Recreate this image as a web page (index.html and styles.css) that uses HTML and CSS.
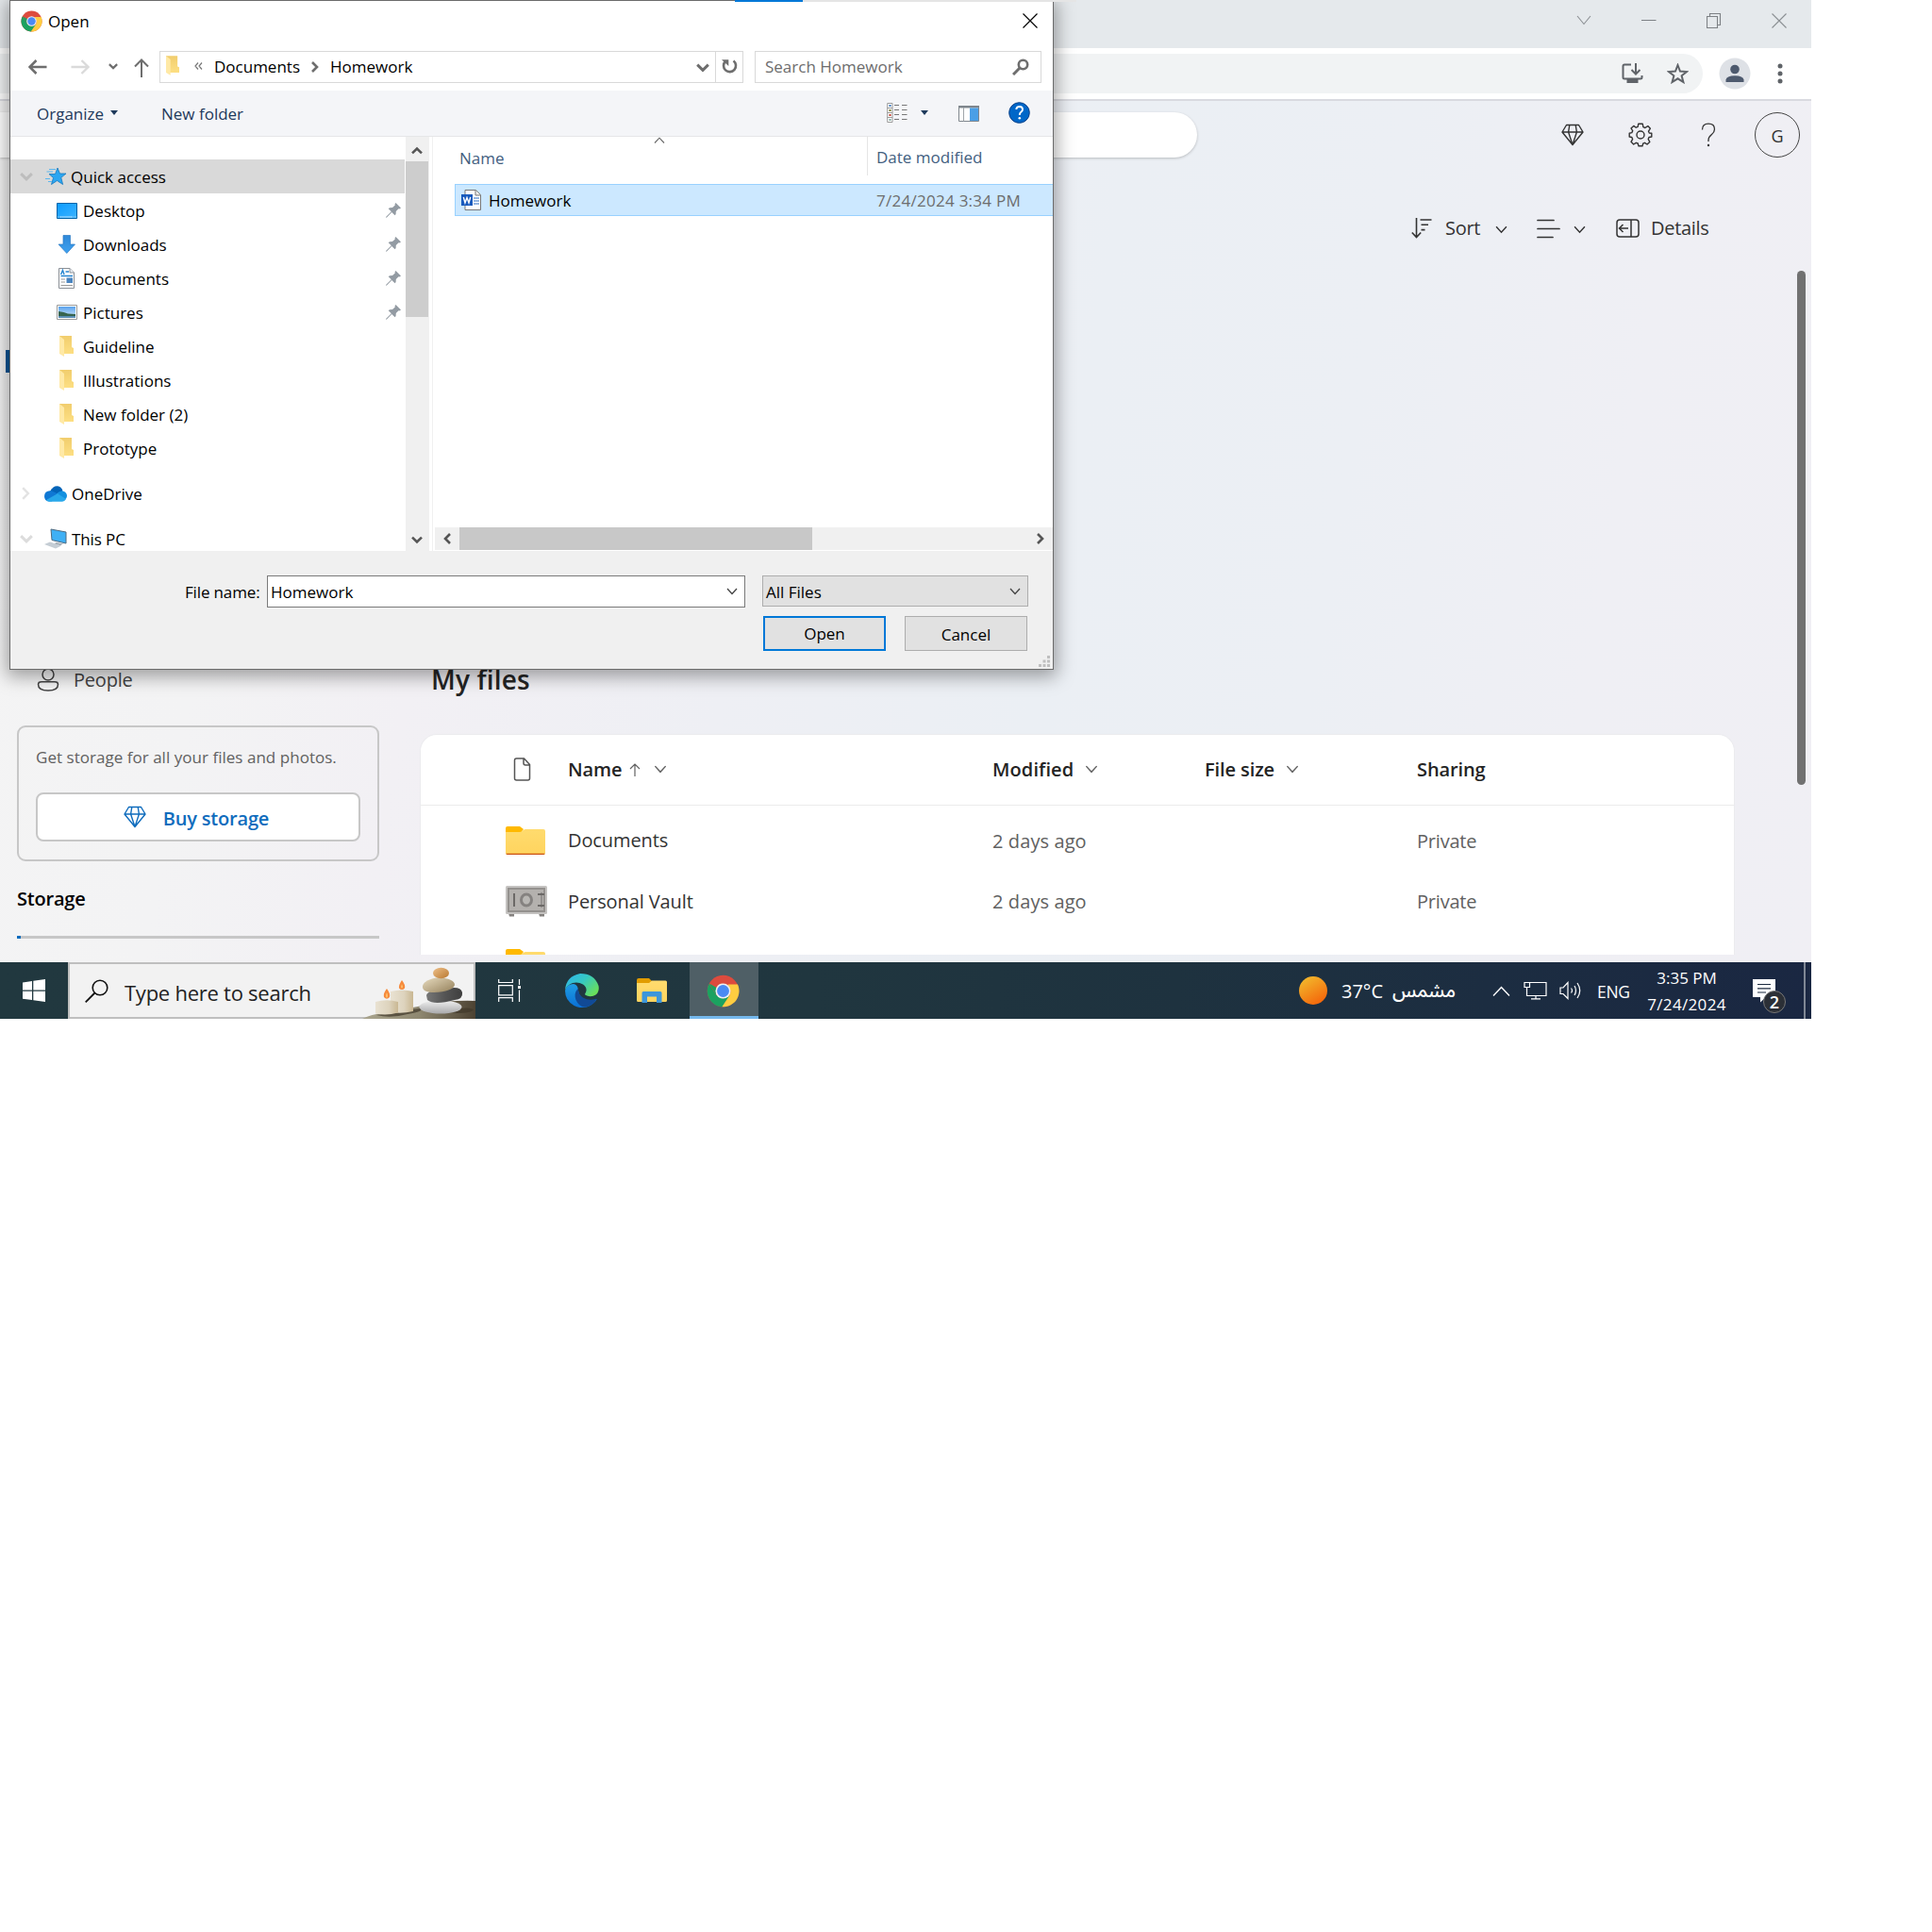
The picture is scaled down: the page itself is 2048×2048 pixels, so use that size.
FILE: index.html
```html
<!DOCTYPE html>
<html lang="en">
<head>
<meta charset="utf-8">
<title>Desktop</title>
<link rel="stylesheet" href="styles.css">
</head>
<body>
<svg class="defs" width="0" height="0" aria-hidden="true">
  <defs>
    <linearGradient id="gFold" x1="0" y1="0" x2="0" y2="1"><stop offset="0" stop-color="#f1cd6d"/><stop offset="1" stop-color="#fddf83"/></linearGradient>
    <linearGradient id="gDesk" x1="0" y1="0" x2="1" y2="1"><stop offset="0" stop-color="#0a9bff"/><stop offset="1" stop-color="#3db4ff"/></linearGradient>
    <linearGradient id="gDown" x1="0" y1="0" x2="0" y2="1"><stop offset="0" stop-color="#2f88d8"/><stop offset="1" stop-color="#3fa2f0"/></linearGradient>
    <linearGradient id="gSky" x1="0" y1="0" x2="0" y2="1"><stop offset="0" stop-color="#5aa2ee"/><stop offset="1" stop-color="#d8ecfa"/></linearGradient>
    <linearGradient id="gYellow" x1="0" y1="0" x2="0" y2="1"><stop offset="0" stop-color="#ffdb6e"/><stop offset="1" stop-color="#ffd45e"/></linearGradient>
    <linearGradient id="gSun" x1="0" y1="0" x2=".6" y2="1"><stop offset="0" stop-color="#f2c230"/><stop offset="1" stop-color="#f4690c"/></linearGradient>
    <linearGradient id="gEdgeTop" x1="0" y1="0" x2="1" y2=".7"><stop offset="0" stop-color="#2fb3ef"/><stop offset=".5" stop-color="#35c8c4"/><stop offset="1" stop-color="#6ae05a"/></linearGradient>
    <linearGradient id="gEdgeLow" x1="0" y1="0" x2="0" y2="1"><stop offset="0" stop-color="#1f9de4"/><stop offset="1" stop-color="#0a70d6"/></linearGradient>
    <linearGradient id="gCandle" x1="0" y1="0" x2="1" y2="0"><stop offset="0" stop-color="#e9e2d2"/><stop offset=".6" stop-color="#ddd3bd"/><stop offset="1" stop-color="#c9b792"/></linearGradient>
    <linearGradient id="gTable" x1="0" y1="0" x2="1" y2="0"><stop offset="0" stop-color="#aaa58e"/><stop offset=".5" stop-color="#8f8871"/><stop offset="1" stop-color="#4c4232"/></linearGradient>
    <linearGradient id="gStoneA" x1="0" y1="0" x2="1" y2="1"><stop offset="0" stop-color="#edc08a"/><stop offset="1" stop-color="#b9782f"/></linearGradient>
    <linearGradient id="gStoneB" x1="0" y1="0" x2="1" y2="1"><stop offset="0" stop-color="#e8dcc0"/><stop offset="1" stop-color="#94805a"/></linearGradient>
    <linearGradient id="gStoneC" x1="0" y1="0" x2="1" y2="0"><stop offset="0" stop-color="#777"/><stop offset=".5" stop-color="#555"/><stop offset="1" stop-color="#3e3e3e"/></linearGradient>
    <linearGradient id="gStoneD" x1="0" y1="0" x2="0" y2="1"><stop offset="0" stop-color="#f0f0f0"/><stop offset="1" stop-color="#a9a9ab"/></linearGradient>
    <symbol id="chrome" viewBox="0 0 48 48">
      <circle cx="24" cy="24" r="23" fill="#dd4b3e"/>
      <path d="M3.500 13.500A23 23 0 0 0 23 47L34 30 24 35 14 29.700z" fill="#1ba260"/>
      <path d="M45.200 14.500A23 23 0 0 1 22.500 47L34 29.500 35 24 31 14.500z" fill="#ffcd41"/>
      <path d="M3.800 13 14 29.800 16 20z" fill="#1ba260"/>
      <circle cx="24" cy="24" r="11" fill="#f1f1f1"/><circle cx="24" cy="24" r="8.800" fill="#4a8af4"/>
    </symbol>
    <symbol id="chev" viewBox="0 0 12 8"><path d="M1 1 6 6.500 11 1" fill="none" stroke="currentColor" stroke-width="1.300"/></symbol>
    <symbol id="chevBold" viewBox="0 0 14 9"><path d="M1.200 1.200 7 6.800 12.800 1.200" fill="none" stroke="currentColor" stroke-width="3"/></symbol>
    <symbol id="folderSmall" viewBox="0 0 15 22"><path d="M0 0H13V12L15 13V19H0z" fill="url(#gFold)"/><path d="M0 0 5 4V22L0 19z" fill="#ffe9a6"/></symbol>
    <symbol id="pin" viewBox="0 0 16 16"><path d="M10.500 0 16 5.500 14.500 6.500 13.500 6.200 10.800 9 10.600 12 9.600 13.200 6.300 9.900 1 15.600 0 15.800 .3 14.800 5.800 9.200 2.700 6.300 4 5.200 7 5 9.800 2.400 9.500 1.200z" fill="#939ba3"/></symbol>
    <symbol id="gem" viewBox="0 0 24 23"><path d="M5.500 1H18.500L23 8.500 12 22 1 8.500zM1 8.500H23M8.800 1 7.600 8.500 12 22 16.400 8.500 15.200 1" fill="none" stroke="currentColor" stroke-width="1.400" stroke-linejoin="round"/></symbol>
    <symbol id="folderBig" viewBox="0 0 42 30"><path d="M0 2Q0 0 2 0H15L19 3 15 8H0z" fill="#ffb900"/><path d="M0 6H14.500Q16.500 6 18 4.500 19.500 3 21 3H40Q42 3 42 5V28Q42 30 40 30H2Q0 30 0 28z" fill="url(#gYellow)"/><path d="M.3 28.800H41.700Q41.400 30 40 30H2Q.6 30 .3 28.800z" fill="#ca5010"/></symbol>
  </defs>
</svg>

<div class="screen">
  <main class="browser">
    <header class="tabstrip">
      <svg width="16" height="11" viewBox="0 0 16 11"><path d="M1 1 8 9.500 15 1" fill="none" stroke="#8b8f93" stroke-width="1.100"/></svg>
      <svg width="16" height="16" viewBox="0 0 16 16"><path d="M0 7.500H15.500" stroke="#7d8185"/></svg>
      <svg width="16" height="16" viewBox="0 0 16 16"><path d="M.5 3.500H11.500V15.500H.5zM3.500 3.500V.5H14.500V12.500H11.500" fill="none" stroke="#7d8185" stroke-width="1.100"/></svg>
      <svg width="16" height="16" viewBox="0 0 16 16"><path d="M.5 .5 15.500 15.500M15.500 .5 .5 15.500" stroke="#8b8f93" stroke-width="1.100"/></svg>
    </header>
    <div class="toolbar">
      <div class="omnibox">
        <svg width="23" height="22" viewBox="0 0 23 22"><path d="M10 1.500H3Q1.500 1.500 1.500 3V15Q1.500 16.500 3 16.500H20Q21.500 16.500 21.500 15V13" fill="none" stroke="#5f6368" stroke-width="2"/><path d="M5.500 17H17.500V21H5.500z" fill="#5f6368"/><path d="M15 0V11M10.500 7 15 11.500 19.500 7" fill="none" stroke="#5f6368" stroke-width="2"/></svg>
        <svg width="23" height="22" viewBox="0 0 23 22"><path d="M11.500 2 14 8.500 21 9 15.600 13.300 17.400 20 11.500 16.300 5.600 20 7.400 13.300 2 9 9 8.500z" fill="none" stroke="#5f6368" stroke-width="2"/></svg>
      </div>
      <svg class="profile" width="34" height="34" viewBox="0 0 34 34"><circle cx="17" cy="17" r="16.500" fill="#dee1e6"/><circle cx="17" cy="12.500" r="4.800" fill="#4e5a6e"/><path d="M7.500 26V23.500Q8 19.500 17 19.300 26 19.500 26.500 23.500V26z" fill="#4e5a6e"/></svg>
      <svg width="8" height="22" viewBox="0 0 8 22"><g fill="#5f6368"><circle cx="4" cy="3" r="2.500"/><circle cx="4" cy="11" r="2.500"/><circle cx="4" cy="19" r="2.500"/></g></svg>
    </div>

    <div class="page">
      <div class="page-head">
        <div class="site-search"></div>
        <div class="head-icons">
          <svg class="gem" width="24" height="24"><use href="#gem"/></svg>
          <svg width="26" height="26" viewBox="0 0 26 26"><path d="M10.800 1.200H15.200L15.900 4.600 17.900 5.500 20.800 3.600 23.400 6.200 21.500 9.200 22.300 11 24.800 11.300V15L22 15.500 21.200 17.500 22.800 20.400 20 23 17.500 21.300 15.700 22.100 15 24.800H11L10.200 22 8.300 21.300 5.700 23 3 20.300 4.600 17.600 3.800 15.500 1.200 15V11.200L3.800 10.600 4.700 8.700 3 6 5.800 3.400 8.200 5.200 10.200 4.400z" fill="none" stroke="#333" stroke-width="1.400" stroke-linejoin="round"/><circle cx="13" cy="13" r="4" fill="none" stroke="#333" stroke-width="1.400"/></svg>
          <svg width="16" height="26" viewBox="0 0 16 26"><path d="M1.500 7.500Q1.500 1.200 8 1.200 14.500 1.200 14.500 7 14.500 10 11.500 12.500 8 15.300 8 18.500V20" fill="none" stroke="#333" stroke-width="1.300"/><circle cx="8" cy="24" r="1.200" fill="#333"/></svg>
          <span class="avatar">G</span>
        </div>
      </div>
      <div class="commands">
        <svg width="22" height="22" viewBox="0 0 22 22"><path d="M5.500 0V20M.8 15.500 5.500 20.500 10.200 15.500M9.500 2H21.500M10.500 7.300H18M10.500 12.600H14.500" fill="none" stroke="#333" stroke-width="1.600"/></svg>
        <span class="cmd">Sort</span>
        <svg class="cchev" width="13" height="9"><use href="#chev"/></svg>
        <svg class="lines" width="25" height="21" viewBox="0 0 25 21"><path d="M1 1.500H18M1 10.500H24M1 19.500H17" stroke="#333" stroke-width="1.700" stroke-linecap="round"/></svg>
        <svg class="cchev2" width="13" height="9"><use href="#chev"/></svg>
        <svg class="panel" width="25" height="20" viewBox="0 0 25 20"><rect x="1" y="1" width="23" height="18" rx="3" fill="none" stroke="#333" stroke-width="1.500"/><path d="M16 1V19M3.500 10H13M7.500 6 3.500 10 7.500 14" fill="none" stroke="#333" stroke-width="1.500"/></svg>
        <span class="cmd">Details</span>
      </div>

      <div class="content">
        <aside class="sidebar">
          <div class="marker"></div>
          <div class="nav-item">
            <svg width="24" height="26" viewBox="0 0 24 26"><circle cx="12" cy="7" r="6" fill="none" stroke="#424242" stroke-width="1.500"/><path d="M5 14.800H19Q22.500 14.800 22.500 17.500 22.500 24 12 24 1.500 24 1.500 17.500 1.500 14.800 5 14.800z" fill="none" stroke="#424242" stroke-width="1.500"/></svg>
            <span>People</span>
          </div>
          <div class="upsell">
            <p>Get storage for all your files and photos.</p>
            <button class="buy"><svg width="24" height="24"><use href="#gem"/></svg><span>Buy storage</span></button>
          </div>
          <h3>Storage</h3>
          <div class="meter"><i></i></div>
        </aside>
        <section class="files">
          <h2>My files</h2>
          <div class="table">
            <div class="tr th">
              <span class="c-icon"><svg width="19" height="25" viewBox="0 0 19 25"><path d="M11.500 1H3.500Q1.500 1 1.500 3V22Q1.500 24 3.500 24H15.500Q17.500 24 17.500 22V7.500zM11 1.500V6Q11 8 13 8H17" fill="none" stroke="#555" stroke-width="1.500"/></svg></span>
              <span class="c-name">Name <svg class="up" width="12" height="14" viewBox="0 0 12 14"><path d="M6 14V1.500M1 6 6 1 11 6" fill="none" stroke="#616161" stroke-width="1.200"/></svg><svg class="hchev" width="14" height="9"><use href="#chev"/></svg></span>
              <span class="c-mod">Modified <svg class="hchev" width="14" height="9"><use href="#chev"/></svg></span>
              <span class="c-size">File size <svg class="hchev" width="14" height="9"><use href="#chev"/></svg></span>
              <span class="c-share">Sharing</span>
            </div>
            <div class="tr first">
              <span class="c-icon"><svg width="42" height="30"><use href="#folderBig"/></svg></span>
              <span class="c-name">Documents</span><span class="c-mod">2 days ago</span><span class="c-size"></span><span class="c-share">Private</span>
            </div>
            <div class="tr">
              <span class="c-icon"><svg width="44" height="33" viewBox="0 0 44 33"><path d="M3 29H9V32.500H4zM35 29H41V32.500H36z" fill="#85827f"/><rect width="44" height="30" rx="1.500" fill="#c4c2c0"/><rect x="3" y="3" width="38" height="24" fill="#b4b1ae" stroke="#94918e" stroke-width="2"/><path d="M9 8V22" stroke="#6c6967" stroke-width="2"/><ellipse cx="22" cy="15" rx="5.500" ry="6" fill="#b9b7b4" stroke="#858280" stroke-width="3"/><path d="M38 7V23" stroke="#8a8785" stroke-width="1.500"/><path d="M34 9H41M34 21H41" stroke="#6c6967" stroke-width="2.200"/></svg></span>
              <span class="c-name">Personal Vault</span><span class="c-mod">2 days ago</span><span class="c-size"></span><span class="c-share">Private</span>
            </div>
            <div class="tr">
              <span class="c-icon"><svg width="42" height="30"><use href="#folderBig"/></svg></span>
              <span class="c-name">Pictures</span>
            </div>
          </div>
        </section>
        <div class="scroll-thumb"></div>
      </div>
    </div>
  </main>

  <footer class="taskbar">
    <div class="start"><svg width="24" height="24" viewBox="0 0 24 24"><path d="M0 3.400 10 2V11.400H0zM11.300 1.800 24 0V11.400H11.300zM0 12.700H10V22.100L0 20.700zM11.300 12.700H24V24L11.300 22.200z" fill="#fff"/></svg></div>
    <div class="tb-search">
      <svg width="25" height="25" viewBox="0 0 25 25"><circle cx="16" cy="9" r="7.800" fill="none" stroke="#111" stroke-width="1.600"/><path d="M10.500 14.500 .7 24.300" stroke="#111" stroke-width="1.800"/></svg>
      <span>Type here to search</span>
      <svg class="art" width="120" height="56" viewBox="0 0 120 56">
        <path d="M0 56 Q10 51 22 50L64 42Q90 36 120 37V56z" fill="url(#gTable)"/>
        <path d="M15 52Q40 47 62 45 66 48 48 51 30 56 15 52zM90 48Q112 42 118 46 116 50 100 50z" fill="#40372a" opacity=".7"/>
        <path d="M30 27Q42 24 54 27V48Q42 51 30 49z" fill="url(#gCandle)"/>
        <path d="M14 38Q26 34.500 38 38V49.500Q26 53 14 50.500z" fill="url(#gCandle)"/>
        <path d="M42 15Q46 20 45 23.500 42 26.500 39 23.500 38.500 20 42 15zM26 24Q30 29 29 33 26 36.500 23 33 22 29 26 24z" fill="#f68a3c"/>
        <path d="M42 19Q43.500 22 42 24 40.500 22 42 19zM26 28Q27.500 32 26 34 24.500 32 26 28z" fill="#ffd27a"/>
        <ellipse cx="83" cy="43.500" rx="22.500" ry="7" fill="url(#gStoneD)"/>
        <path d="M68 31Q70 25 86 25 104 20 106 28 107 35 98 36 76 42 69 36z" fill="url(#gStoneC)"/>
        <path d="M64 21Q66 14 82 12 98 14 98 20 96 27 76 28 63 28 64 21z" fill="url(#gStoneB)"/>
        <ellipse cx="83.500" cy="7.500" rx="8.500" ry="5.800" fill="url(#gStoneA)"/>
      </svg>
    </div>
    <div class="app taskview"><svg width="25" height="24" viewBox="0 0 25 24"><path d="M.7 0V3.500H15.300V0M.7 24V19.700H15.300V24M.7 6.700H15.300V16.800H.7zM22.500 0V6M22.500 11.500V24" fill="none" stroke="#fff" stroke-width="1.200"/><path d="M21 7H24V10H21z" fill="#fff"/></svg></div>
    <div class="app edge"><svg width="36" height="36" viewBox="0 0 36 36"><path d="M0 18A18 18 0 0 0 28 33Q33 29.500 33.500 27 26 31 19.500 27 14.500 23.500 14 18 13.800 12 9 11 2 11 0 18z" fill="url(#gEdgeLow)"/><path d="M13.500 16Q9 21 11.500 28 14.500 35 21 35.700 29 34.500 33.500 27.500 33.500 26.300 32 27 25 29 19 25.500 14 22 14 17z" fill="#114a96"/><path d="M0 17.500Q1 3 16 0 31 0 35.500 13 37 21 30 23.800 25 25 21.500 22.800 20.500 21.500 22 20 24 15 19 11.500 14 8.500 8 10 2 12 0 17.500z" fill="url(#gEdgeTop)"/></svg></div>
    <div class="app explorer"><svg width="32" height="27" viewBox="0 0 32 27"><path d="M0 2Q0 0 2 0H13L16 3 13 8H0z" fill="#e19c00"/><path d="M0 5H13L16 2.500H30.500Q32 2.500 32 4V23.500Q32 25 30.500 25H1.500Q0 25 0 23.500z" fill="url(#gYellow)"/><path d="M5.500 26V15.500Q5.500 14 7 14H25Q26.500 14 26.500 15.500V26H21V19.500H11V26z" fill="#3c96db"/></svg></div>
    <div class="app active"><svg width="35" height="35"><use href="#chrome"/></svg></div>
    <div class="tray">
      <svg class="sun" width="30" height="30" viewBox="0 0 30 30"><circle cx="15" cy="15" r="15" fill="url(#gSun)"/></svg>
      <span class="temp">37°C</span>
      <span class="ar" lang="ar" dir="rtl">مشمس</span>
      <svg class="tcaret" width="19" height="11" viewBox="0 0 19 11"><path d="M1 10.500 9.500 1.500 18 10.500" fill="none" stroke="#fff" stroke-width="1.400"/></svg>
      <svg class="net" width="25" height="20" viewBox="0 0 25 20"><path d="M6.500 1.500H24V15.500H3.500V9M8 18.800H18M13 15.500V18.800M1 1.500H6.500V6.500H1zM3.500 6.500V9" fill="none" stroke="#fff" stroke-width="1.200"/></svg>
      <svg class="vol" width="24" height="20" viewBox="0 0 24 20"><path d="M1 7H4L9 1.500V18.500L4 13.500H1z" fill="none" stroke="#fff" stroke-width="1.200"/><path d="M12.500 7.500Q14.500 10 12.500 12.500M16 5Q19 10 16 15M19 2Q24.500 10 19 18" fill="none" stroke="#fff" stroke-width="1.200"/></svg>
      <span class="eng">ENG</span>
      <div class="clock"><span>3:35 PM</span><span class="day">7/24/2024</span></div>
      <div class="action"><svg width="24" height="25" viewBox="0 0 24 25"><path d="M0 0H24V19H14L8 24.500V19H0z" fill="#fff"/><path d="M5 5.500H19M5 9.800H19M5 14H14" stroke="#1c2b40" stroke-width="1.200"/></svg><b>2</b></div>
      <i class="peek"></i>
    </div>
  </footer>

  <div class="dialog">
    <i class="progress"></i>
    <div class="d-title">
      <svg width="23" height="23"><use href="#chrome"/></svg>
      <span>Open</span>
      <svg class="close" width="16" height="16" viewBox="0 0 16 16"><path d="M.5 .5 15.500 15.500M15.500 .5 .5 15.500" stroke="#000" stroke-width="1.200"/></svg>
    </div>
    <div class="d-nav">
      <svg class="back" width="20" height="16" viewBox="0 0 20 16"><path d="M1.500 8H19.500M8.500 1 1.500 8 8.500 15" fill="none" stroke="#6e6e6e" stroke-width="2.500"/></svg>
      <svg class="fwd" width="20" height="16" viewBox="0 0 20 16"><path d="M.5 8H18.500M11.500 1 18.500 8 11.500 15" fill="none" stroke="#dadada" stroke-width="2.300"/></svg>
      <svg class="recent" width="10" height="7"><use href="#chevBold"/></svg>
      <svg class="upd" width="16" height="20" viewBox="0 0 16 20"><path d="M8 20V1.500M1 8.500 8 1.500 15 8.500" fill="none" stroke="#6e6e6e" stroke-width="2"/></svg>
      <div class="address">
        <svg class="loc" width="14" height="21"><use href="#folderSmall"/></svg>
        <svg class="laquo" width="9" height="8" viewBox="0 0 9 8"><path d="M4 .5 1 4 4 7.500M8 .5 5 4 8 7.500" fill="none" stroke="#777" stroke-width="1.200"/></svg>
        <span class="crumb">Documents</span>
        <svg class="sep" width="8" height="12" viewBox="0 0 8 12"><path d="M1 1 6 6 1 11" fill="none" stroke="#6e6e6e" stroke-width="2.600"/></svg>
        <span class="crumb">Homework</span>
        <svg class="drop" width="14" height="10"><use href="#chevBold"/></svg>
        <span class="refresh"><svg width="17" height="17" viewBox="0 0 17 17"><path d="M12.500 2.500A6.500 6.500 0 1 1 4 3" fill="none" stroke="#6e6e6e" stroke-width="2.600"/><path d="M0 1.300H7.300V8z" fill="#6e6e6e"/></svg></span>
      </div>
      <div class="d-search"><span>Search Homework</span>
        <svg width="18" height="18" viewBox="0 0 18 18"><circle cx="11.500" cy="6.500" r="4.700" fill="none" stroke="#6e6e6e" stroke-width="2.600"/><path d="M8 10 1 17" stroke="#6e6e6e" stroke-width="3"/></svg>
      </div>
    </div>
    <div class="d-tools">
      <span class="organize">Organize</span><i class="tri"></i>
      <span class="newf">New folder</span>
      <svg class="views" width="22" height="21" viewBox="0 0 22 21"><path d="M.7 .5H6V20.500H.7zM.7 5.500H6M.7 10.500H6M.7 15.500H6" fill="#fff" stroke="#9a9a9a"/><path d="M2.500 2H4.500V4H2.500z" fill="#3b78c0"/><path d="M2.500 7H4.500V9H2.500z" fill="#7a7a20"/><path d="M2.500 12H4.500V14H2.500z" fill="#c0392b"/><path d="M2.500 17H4.500V19H2.500z" fill="#7fa9a0"/><path d="M8 2.500H13M16 2.500H21.500M8 7.500H13M16 7.500H21.500M8 12.500H13M16 12.500H21.500M8 17.500H13M16 17.500H21.500" stroke="#777" stroke-width="1.200"/></svg>
      <i class="tri"></i>
      <svg class="pane" width="22" height="17" viewBox="0 0 22 17"><path d="M.5 .5H21.500V16.500H.5z" fill="#fff" stroke="#7f868d"/><path d="M0 0H22V2.500H0z" fill="#7f868d"/><path d="M5.500 2V16.500" stroke="#a0a5aa"/><path d="M12 2.500H21V16H12z" fill="#4a9fe6"/></svg>
      <svg class="help" width="23" height="23" viewBox="0 0 23 23"><circle cx="11.500" cy="11.500" r="10.800" fill="#0067c8" stroke="#0b3f86"/><path d="M8.300 8Q8.500 5 11.700 5 15 5.200 15 8 15 9.700 13.300 10.800 11.800 12 11.800 14" fill="none" stroke="#fff" stroke-width="1.900"/><circle cx="11.800" cy="17.300" r="1.300" fill="#fff"/></svg>
    </div>
    <div class="d-body">
      <ul class="tree">
        <li class="root sel"><svg class="tw" width="14" height="9"><use href="#chevBold"/></svg><svg class="ic" width="22" height="18" viewBox="0 0 22 18"><path d="M13 0 15.500 6H22L16.800 10.300 18.600 17.500 12.500 13.500 6.500 17.500 8.500 10.500 4 6.500H10.500z" fill="#2ba6f2" stroke="#1879bd" stroke-width=".8"/><path d="M4 1.500H11M1.500 4H8M0 11.500H5M3 14.500H7" stroke="#5db7ee" stroke-width="1.200"/></svg><span>Quick access</span></li>
        <li><svg class="ic" width="22" height="17" viewBox="0 0 22 17"><path d="M.5 .5H21.500V16.500H.5z" fill="url(#gDesk)" stroke="#0063a8"/><path d="M1 15H21" stroke="#bfe4ff" stroke-dasharray="1 1 14 1 1 1"/></svg><span>Desktop</span><svg class="pin" width="16" height="16"><use href="#pin"/></svg></li>
        <li><svg class="ic" width="22" height="20" viewBox="0 0 22 20"><path d="M7 .5H14.500V10H19.500L10.800 19.500 2 10H7z" fill="url(#gDown)" stroke="#2a7ac4" stroke-width=".7"/></svg><span>Downloads</span><svg class="pin" width="16" height="16"><use href="#pin"/></svg></li>
        <li><svg class="ic" width="22" height="22" viewBox="0 0 22 22"><path d="M2.500 .5H14L18.500 5V21.500H2.500z" fill="#fff" stroke="#8b9096"/><path d="M14 .5V5H18.500" fill="#e8eef4" stroke="#8b9096"/><path d="M4.500 7 6.500 2.500 8 7M9.500 4H13M4.500 8.500H17" fill="none" stroke="#2484d0" stroke-width="1.400"/><path d="M4.500 12H9M4.500 15H9M4.500 18.500H17" stroke="#999" stroke-width="1.200"/><path d="M10.500 10.500H17V16H10.500z" fill="#4a84bf"/></svg><span>Documents</span><svg class="pin" width="16" height="16"><use href="#pin"/></svg></li>
        <li><svg class="ic" width="22" height="16" viewBox="0 0 22 16"><path d="M.5 .5H21.500V15.500H.5z" fill="#fff" stroke="#9a9a9a"/><path d="M2 2H20V14H2z" fill="url(#gSky)"/><path d="M2 7Q8 7.500 12 9.500L20 10V12H2z" fill="#37644f"/><path d="M2 12H20V14H2z" fill="#5b8fb5"/></svg><span>Pictures</span><svg class="pin" width="16" height="16"><use href="#pin"/></svg></li>
        <li><svg class="ic fold" width="15" height="22"><use href="#folderSmall"/></svg><span>Guideline</span></li>
        <li><svg class="ic fold" width="15" height="22"><use href="#folderSmall"/></svg><span>Illustrations</span></li>
        <li><svg class="ic fold" width="15" height="22"><use href="#folderSmall"/></svg><span>New folder (2)</span></li>
        <li><svg class="ic fold" width="15" height="22"><use href="#folderSmall"/></svg><span>Prototype</span></li>
        <li class="root drive"><svg class="tw" width="9" height="14" viewBox="0 0 9 14"><path d="M1.200 1.200 6.800 7 1.200 12.800" fill="none" stroke="#e3e3e3" stroke-width="2.500"/></svg><svg class="ic" width="24" height="17" viewBox="0 0 24 17"><path d="M6 6Q9 0 14 .3 18 .8 19.500 5.500L12 9z" fill="#0364b8"/><path d="M0 11Q.3 5.500 6 5.300 9 5 14.500 9L8 16.500H5Q0 16 0 11z" fill="#0f78d4"/><path d="M13 8.500Q16 5 19.500 5.500 24 6.500 24 11 23.500 14 22 14.500z" fill="#1490df"/><path d="M2 15 14 8.300 23 14Q21.500 16.500 19 16.700H5Q3 16.500 2 15z" fill="#28a8ea"/></svg><span>OneDrive</span></li>
        <li class="root pc"><svg class="tw" width="14" height="9"><use href="#chevBold"/></svg><svg class="ic" width="24" height="22" viewBox="0 0 24 22"><path d="M7 1 23 4V16L8 12.500z" fill="#3fb0f5" stroke="#4e6a80"/><path d="M12 15 20 16.500 17 18 11 17z" fill="#9fa8b0"/><path d="M0 17 6 14.500 18 18.500 12 21.500z" fill="#c5cdd4"/></svg><span>This PC</span></li>
      </ul>
      <div class="vscroll"><svg width="12" height="9" viewBox="0 0 14 9"><path d="M1.200 7.800 7 2.200 12.800 7.800" fill="none" stroke="#555" stroke-width="3"/></svg><i></i><svg width="12" height="9"><use href="#chevBold"/></svg></div>
      <div class="list">
        <svg class="sortmark" width="12" height="7" viewBox="0 0 12 7"><path d="M1 6.500 6 1.200 11 6.500" fill="none" stroke="#666" stroke-width="1.100"/></svg>
        <div class="l-head"><span>Name</span><span class="date">Date modified</span></div>
        <div class="l-row">
          <svg width="21" height="22" viewBox="0 0 21 22"><path d="M4 .5H15.500L20.500 5.500V21.500H4z" fill="#fff" stroke="#777"/><path d="M15 .5V6H20.500" fill="#eee" stroke="#777"/><path d="M13 9H19M13 12H19M13 15H19" stroke="#2b6cc4" stroke-width="1.200"/><path d="M0 5H12V17H0z" fill="#185abd"/><path d="M2.300 8 4 14 6 8.500 8 14 9.700 8" fill="none" stroke="#fff" stroke-width="1.400"/></svg>
          <span class="fname">Homework</span><span class="fdate">7/24/2024 3:34 PM</span>
        </div>
        <div class="hscroll"><svg width="9" height="12" viewBox="0 0 9 12"><path d="M8 1 3 6 8 11" fill="none" stroke="#555" stroke-width="2.600"/></svg><i></i><svg width="9" height="12" viewBox="0 0 9 12"><path d="M1 1 6 6 1 11" fill="none" stroke="#555" stroke-width="2.600"/></svg></div>
      </div>
    </div>
    <div class="d-foot">
      <div class="f-row">
        <label>File name:</label>
        <div class="f-input"><span>Homework</span><svg width="12" height="8"><use href="#chev"/></svg></div>
        <div class="f-select"><span>All Files</span><svg width="12" height="8"><use href="#chev"/></svg></div>
      </div>
      <div class="f-btns"><button class="primary">Open</button><button>Cancel</button></div>
      <svg class="grip" width="12" height="12" viewBox="0 0 12 12"><path d="M9 0h3v3H9zM4.500 4.500h3v3h-3zM9 4.500h3v3H9zM0 9h3v3H0zM4.500 9h3v3h-3zM9 9h3v3H9z" fill="#bfbfbf"/></svg>
    </div>
  </div>
</div>
</body>
</html>
```
FILE: styles.css
```css
* { box-sizing: border-box; }
html, body { margin: 0; background: #fff; }
body { font-family: "Open Sans", "Noto Sans", sans-serif; font-size: 17px; line-height: 24px; color: #000; white-space: nowrap; }
svg { display: block; flex: none; }
svg.defs { position: absolute; }
button { font: inherit; color: inherit; padding: 0; margin: 0; }
h2, h3, p, ul { margin: 0; padding: 0; list-style: none; }

.screen { position: relative; width: 1920px; height: 1080px; overflow: hidden; }

/* Browser window */
.browser { display: flex; flex-direction: column; height: 1020px; }
.tabstrip { height: 51px; flex: none; display: flex; justify-content: flex-end; align-items: flex-start; gap: 53px; padding: 14px 26px 0 0; background: #e5e9ec; }
.tabstrip svg:first-child { margin-top: 2px; }
.toolbar { height: 54px; flex: none; display: flex; align-items: center; background: #fff; padding-right: 29px; }
.omnibox { flex: 1; height: 42px; border-radius: 0 21px 21px 0; background: #f1f3f4; display: flex; justify-content: flex-end; align-items: center; gap: 25px; padding-right: 15px; }
.profile { margin: 0 27px 0 17px; }

.page { flex: 1; min-height: 0; border-top: 2px solid #d9dae0; display: flex; flex-direction: column;
  background: linear-gradient(100deg, #f4f4f4 0%, #f3f3f4 15%, #f2f0f4 26%, #eeeff4 42%, #ebeff4 58%, #eceff4 72%, #efeff4 86%, #f0eff4 100%); }
.page-head { display: flex; justify-content: space-between; height: 60px; padding: 12px 12px 0 0; }
.site-search { width: 1269px; height: 48px; background: #fff; border-radius: 0 24px 24px 0; box-shadow: 0 1px 3px rgba(0,0,0,.22); }
.head-icons { display: flex; align-items: center; color: #333; }
.head-icons svg { margin-right: 47px; }
.head-icons svg + svg { margin-right: 51px; }
.head-icons svg + svg + svg { margin-right: 41px; }
.avatar { width: 48px; height: 48px; border: 1px solid #444; border-radius: 50%; text-align: center; line-height: 48px; font-size: 18px; color: #333; }
.commands { display: flex; align-items: center; height: 40px; margin-top: 55px; padding-right: 107px; justify-content: flex-end; color: #333; font-size: 20px; letter-spacing: -.3px; }
.commands .cmd { width: 63px; margin-left: 12px; }
.commands svg + .cmd:nth-child(2) { width: 38px; margin-left: 14px; }
.cchev { margin: 2px 31px 0 15px; }
.cchev2 { margin: 2px 32px 0 14px; }

.content { flex: 1; min-height: 0; display: flex; position: relative; overflow: hidden; }
.sidebar { width: 445px; flex: none; padding: 0 43px 0 0; }
.marker { width: 6px; height: 24px; margin: 109px 0 0 6px; background: #0b5596; }
.nav-item { display: flex; align-items: center; gap: 15px; height: 40px; margin: 306px 0 0 39px; font-size: 20px; letter-spacing: -.2px; color: #424242; }
.upsell { height: 144px; margin: 28px 0 0 18px; padding: 18px; border: 2px solid #c7c7c7; border-radius: 9px; color: #616161; }
.upsell p { height: 51px; line-height: 28px; letter-spacing: .03px; }
.buy { display: flex; width: 100%; height: 52px; align-items: center; justify-content: center; gap: 18px; border: 2px solid #c7c7c7; border-radius: 8px; background: #fff; color: #0f6cbd; font-size: 20px; font-weight: 600; letter-spacing: -.2px; padding-right: 4px; }
.buy span { padding-top: 3px; }
.sidebar h3 { margin: 26px 0 0 18px; font-size: 20px; font-weight: 600; line-height: 28px; letter-spacing: -.2px; }
.meter { height: 3px; margin: 25px 0 0 18px; background: #c7c7c7; }
.meter i { display: block; width: 4px; height: 3px; background: #0f6cbd; }

.files { width: 1394px; }
.files h2 { margin: 438px 0 0 12px; font-size: 28px; line-height: 40px; font-weight: 600; color: #242424; letter-spacing: .15px; }
.table { height: 234px; margin-top: 38px; overflow: hidden; background: #fff; border: 1px solid #ebebee; border-bottom: 0; border-radius: 18px 18px 0 0; color: #616161; font-size: 20px; }
.tr { height: 65px; display: grid; grid-template-columns: 156px 450px 225px 225px 1fr; align-items: center; letter-spacing: -.2px; }
.tr.th { height: 75px; border-bottom: 1px solid #ebebeb; font-weight: 600; color: #242424; letter-spacing: -.1px; }
.tr.first { margin-top: 4px; }
.tr > span { display: flex; align-items: center; }
.tr .c-icon { padding-left: 90px; }
.tr.th .c-icon { padding-left: 98px; margin-top: -2px; }
.tr .c-name { color: #333; letter-spacing: -.1px; }
.tr .c-mod { letter-spacing: .1px; }
.tr.first > .c-mod, .tr.first > .c-share { padding-top: 2px; }
.tr.th .c-name { color: #242424; }
.up { margin-left: 8px; }
.hchev { margin: -2px 0 0 12px; color: #616161; }
.up + .hchev { margin-left: 14px; }
.scroll-thumb { position: absolute; left: 1905px; top: 25px; width: 9px; height: 545px; border-radius: 5px; background: #717171; }

/* Taskbar */
.taskbar { display: flex; height: 60px; color: #fff; background: linear-gradient(90deg, #21383f 0%, #20363f 45%, #1e323f 65%, #1c2d41 82%, #1a2742 100%); }
.start { width: 72px; display: flex; align-items: center; justify-content: center; }
.tb-search { width: 432px; display: flex; align-items: center; background: #f2f2f2; border: 2px solid #bfbfbf; padding-left: 16px; color: #222; font-size: 22px; letter-spacing: -.25px; position: relative; }
.tb-search span { margin-left: 17px; padding-top: 3px; }
.art { position: absolute; right: -2px; bottom: -2px; }
.app { width: 73px; display: flex; align-items: center; justify-content: center; }
.edge { width: 80px; }
.explorer { width: 67px; margin-right: 3px; }
.active { margin-left: 4px; background: #4f5f66; border-bottom: 3px solid #76b9ed; padding: 3px 2px 0 0; }
.tray { display: flex; align-items: center; flex: 1; justify-content: flex-end; }
.temp { width: 44px; margin-left: 15px; font-size: 20px; padding-top: 2px; }
.ar { width: 65px; margin-left: 12px; font-size: 20px; font-weight: 500; font-family: "Noto Sans Arabic", "DejaVu Sans", sans-serif; padding-top: 2px; }
.tcaret { margin-left: 39px; }
.net { margin-left: 14px; }
.vol { margin-left: 13px; }
.eng { width: 33px; margin-left: 16px; letter-spacing: -.3px; font-size: 17.500px; padding-top: 1px; }
.clock { width: 100px; margin-left: 12px; display: flex; flex-direction: column; text-align: center; line-height: 28px; padding-top: 2px; }
.clock .day { letter-spacing: .35px; }
.action { position: relative; margin-left: 20px; }
.action b { position: absolute; left: 11px; top: 12px; width: 24px; height: 24px; border-radius: 50%; border: 1px solid #777; background: #2b2f36; font-size: 18px; font-weight: 600; text-align: center; line-height: 22px; }
.peek { width: 2px; height: 60px; margin: 0 6px 0 30px; background: #7f8794; }

/* File dialog */
.dialog { position: absolute; left: 10px; top: 0; width: 1107px; height: 710px; border: 1px solid #6b6b6b; background: #fff; display: flex; flex-direction: column; box-shadow: 0 4px 18px 3px rgba(0,0,0,.36); }
.progress { position: absolute; left: 768px; top: -1px; width: 362px; height: 2px; background: linear-gradient(90deg, #0078d7 72px, #e5e5e5 72px); }
.d-title { height: 44px; flex: none; display: flex; align-items: center; padding: 0 16px 2px 11px; }
.d-title span { margin-left: 6px; padding-top: 2px; }
.close { margin-left: auto; }
.d-nav { height: 51px; flex: none; display: flex; align-items: center; padding: 0 12px 0 19px; }
.fwd { margin-left: 25px; }
.recent { margin-left: 20px; color: #6e6e6e; }
.upd { margin: 3px 11px 0 17px; }
.address { width: 619px; height: 34px; border: 1px solid #d9d9d9; display: flex; align-items: center; padding-left: 6px; }
.loc { margin-top: -2px; }
.laquo { margin: -2px 12px 0 16px; }
.sep { margin: 0 12px; }
.drop { margin: 2px 6px 0 auto; color: #6e6e6e; }
.refresh { width: 29px; height: 32px; border-left: 1px solid #d9d9d9; display: flex; align-items: center; justify-content: center; }
.d-search { flex: 1; height: 34px; margin-left: 12px; border: 1px solid #d9d9d9; display: flex; align-items: center; justify-content: space-between; padding: 0 12px 0 10px; color: #6d6d6d; }
.d-tools { height: 49px; flex: none; display: flex; align-items: center; background: #f4f5f8; border-bottom: 1px solid #e5e6e8; color: #1e395b; padding: 0 23px 0 28px; }
.tri { border: 4.500px solid transparent; border-top: 5px solid #1e395b; border-bottom: 0; margin-left: 7px; margin-top: -2px; }
.newf { margin: 0 auto 0 46px; padding-top: 1px; }
.views { margin-top: -2px; }
.views + .tri { margin-left: 14px; }
.pane { margin-left: 32px; }
.help { margin: -2px 1px 0 31px; }
.organize { width: 71px; padding-top: 1px; }

.d-body { height: 439px; flex: none; display: flex; }
.tree { width: 419px; padding-top: 24px; height: 439px; overflow: hidden; }
.tree li { height: 36px; display: flex; align-items: center; padding-left: 49px; }
.tree li span { padding-top: 2px; }
.tree li .ic + span { margin-left: 6px; }
.tree .fold { margin: 0 4px 0 3px; }
.pin { margin: 0 5px 0 auto; }
.tree li.root { padding-left: 10px; }
.tree .tw { color: #bdbdbd; margin-right: 13px; }
.sel { width: 418px; background: #d9d9d9; }
.tree li.drive { margin-top: 12px; padding-left: 12px; }
.drive .tw + .ic { margin-left: 2px; }
.tree li.root .ic + span { margin-left: 5px; }
.tree li.pc { margin-top: 12px; }
.pc .tw { color: #dcdcdc; }
.pc .ic { margin-left: -1px; }
.pc .ic + span { letter-spacing: -.1px; }
.vscroll { width: 25px; height: 439px; background: #f0f0f0; display: flex; flex-direction: column; align-items: center; padding: 10px 1px 7px 0; color: #555; }
.vscroll i { width: 24px; height: 165px; margin: 7px 0 auto; background: #cdcdcd; }
.list { position: relative; flex: 1; margin-left: 3px; border-left: 1px solid #f0f0f0; display: flex; flex-direction: column; padding-left: 2px; }
.sortmark { position: absolute; left: 234px; top: 0; }
.l-head { height: 40px; display: flex; align-items: center; color: #43607f; padding: 4px 0 0 26px; }
.l-head span:first-child { width: 432px; padding-top: 1px; }
.l-head .date { border-left: 1px solid #e5e5e5; padding: 10px 0 6px 9px; margin-top: -4px; line-height: 26px; }
.l-row { height: 34px; margin: 10px 0 0 21px; display: flex; align-items: center; background: #cce8ff; border: 1px solid #99d1ff; border-right: 0; padding-left: 6px; }
.l-row span { padding-top: 1px; }
.fname { width: 411px; margin-left: 8px; }
.fdate { color: #6d6d6d; letter-spacing: .27px; }
.hscroll { height: 24px; margin-top: auto; margin-bottom: 1px; background: #f0f0f0; display: flex; align-items: center; padding: 0 8px; }
.hscroll i { width: 374px; height: 24px; margin: 0 auto 0 9px; background: #c8c8c8; }
.d-foot { position: relative; flex: 1; background: #f0f0f0; padding-top: 26px; }
.f-row { display: flex; height: 34px; line-height: 34px; padding-left: 185px; }
.f-row label { width: 87px; padding-top: 1px; letter-spacing: -.15px; }
.f-input, .f-select { display: flex; align-items: center; justify-content: space-between; border: 1px solid #7a7a7a; background: #fff; width: 507px; height: 34px; padding: 0 7px 0 3px; color: #444; }
.f-input span, .f-select span { color: #000; padding-top: 2px; }
.f-select { width: 282px; height: 33px; margin-left: 18px; background: #e1e1e1; border-color: #adadad; }
.f-btns { display: flex; gap: 20px; margin: 9px 0 0 798px; }
.f-btns button { width: 130px; height: 37px; border: 1px solid #adadad; background: #e1e1e1; line-height: 33px; padding-top: 2px; }
.f-btns .primary { border: 2px solid #0078d7; padding-top: 0; }
.grip { position: absolute; right: 3px; bottom: 2px; }
```
